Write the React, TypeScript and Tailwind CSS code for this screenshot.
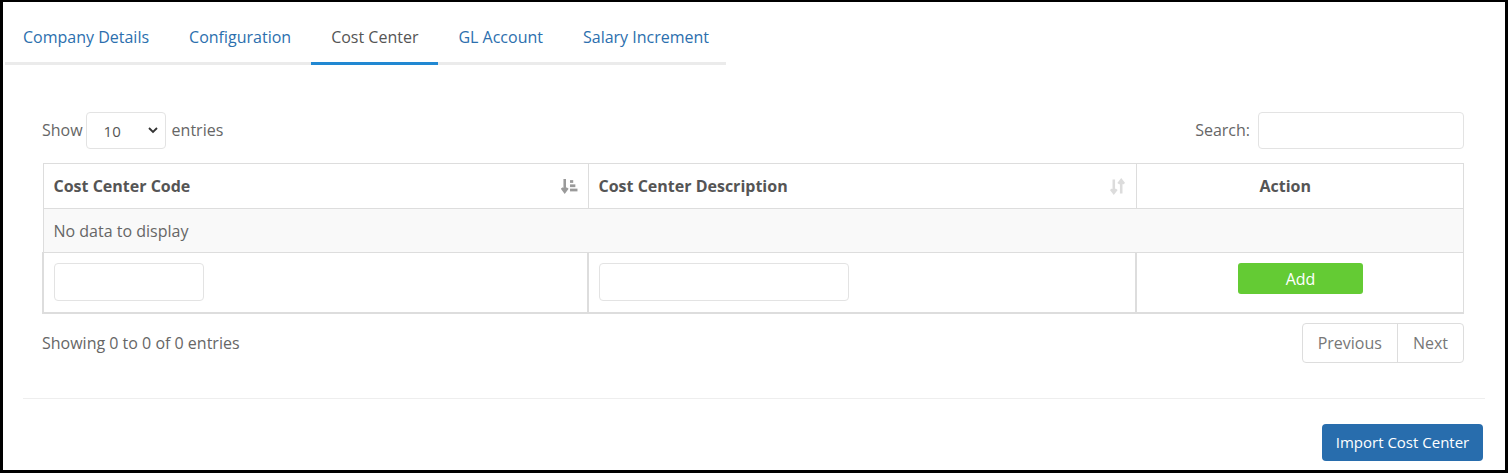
import React from "react";

const SortAsc = () => (
  <svg width="17" height="17" viewBox="0 0 16 16" className="text-[#9a9a9a]">
    <path d="M3.5 1v11M0.8 9.3l2.7 3.7 2.7-3.7" stroke="currentColor" strokeWidth="2.4" fill="none" />
    <rect x="8.5" y="2" width="3" height="2.6" fill="currentColor" />
    <rect x="8.5" y="6" width="5" height="2.6" fill="currentColor" />
    <rect x="8.5" y="10" width="7" height="2.6" fill="currentColor" />
  </svg>
);

const SortBoth = () => (
  <svg width="17" height="17" viewBox="0 0 16 16" className="text-[#dcdcdc]">
    <path d="M4.5 1.5v12M1.8 10.5l2.7 3.5 2.7-3.5" stroke="currentColor" strokeWidth="2.4" fill="none" />
    <path d="M11.5 14.5v-12M8.8 5.5l2.7-3.5 2.7 3.5" stroke="currentColor" strokeWidth="2.4" fill="none" />
  </svg>
);

export default function App() {
  const tabs = ["Company Details", "Configuration", "Cost Center", "GL Account", "Salary Increment"];
  return (
    <div
      className="w-[1508px] h-[473px] bg-white border-black border-t-2 border-l-[3px] border-r-[3px] border-b-[3px] flex flex-col text-[#666] text-[16px]"
      style={{ fontFamily: '"Open Sans", "Noto Sans", sans-serif' }}
    >
      <div className="ml-[2px] w-[721px] flex border-b-[3px] border-[#ebebeb] h-[63px]">
        {tabs.map((t) => {
          const active = t === "Cost Center";
          return (
            <div
              key={t}
              className={
                "shrink-0 whitespace-nowrap px-[20px] pt-[24px] -mb-[3px] border-b-[3px] leading-[22px] first:pl-[18px] " +
                (active ? "border-[#2188d2] text-[#555]" : "border-transparent text-[#2c6fae]")
              }
            >
              {t}
            </div>
          );
        })}
      </div>

      <div className="pl-[39px] pr-[41px] pt-[47px]">
        <div className="flex items-center justify-between h-[36px]">
          <div className="flex items-center">
            <span>Show</span>
            <div className="ml-[3px] w-[80px] h-[37px] border border-[#e3e3e3] rounded-[4px] flex items-center pl-[17px] pr-[4px] justify-between text-[#555] text-[15px]">
              <span className="pt-[2px]">10</span>
              <svg width="14" height="14" viewBox="0 0 14 14" className="mr-[1px]">
                <path d="M3 5l4 4 4-4" stroke="#333" strokeWidth="1.8" fill="none" />
              </svg>
            </div>
            <span className="ml-[6px]">entries</span>
          </div>
          <div className="flex items-center">
            <span>Search:</span>
            <div className="ml-[8px] w-[206px] h-[37px] border border-[#e3e3e3] rounded-[4px]" />
          </div>
        </div>

        <table className="mt-[15px] w-full border-collapse border border-[#dddddd] border-b-2">
          <thead>
            <tr className="h-[45px]">
              <th className="w-[545px] border border-[#dddddd] text-left font-bold text-[#555] px-[10px]">
                <div className="flex items-center justify-between">
                  <span>Cost Center Code</span>
                  <SortAsc />
                </div>
              </th>
              <th className="w-[548px] border border-[#dddddd] text-left font-bold text-[#555] px-[10px]">
                <div className="flex items-center justify-between">
                  <span>Cost Center Description</span>
                  <SortBoth />
                </div>
              </th>
              <th className="border border-[#dddddd] text-center font-bold text-[#555] pr-[29px]">Action</th>
            </tr>
          </thead>
          <tbody>
            <tr className="h-[44px] bg-[#f9f9f9]">
              <td colSpan={3} className="px-[10px] border border-[#dddddd]">No data to display</td>
            </tr>
            <tr className="h-[60px] border-b-2 border-[#dddddd]">
              <td className="border-l-2 border-r-2 border-[#dddddd] px-[10px]">
                <div className="w-[150px] h-[38px] border border-[#e3e3e3] rounded-[4px]" />
              </td>
              <td className="border-r-2 border-[#dddddd] px-[10px]">
                <div className="w-[250px] h-[38px] border border-[#e3e3e3] rounded-[4px]" />
              </td>
              <td className="align-top pt-[10px]">
                <div className="flex justify-center">
                  <div className="ml-[1px] w-[125px] h-[31px] rounded-[3px] bg-[#64cb34] text-white flex items-center justify-center">
                    Add
                  </div>
                </div>
              </td>
            </tr>
          </tbody>
        </table>

        <div className="mt-[9px] flex items-center justify-between h-[40px]">
          <span>Showing 0 to 0 of 0 entries</span>
          <div className="flex h-[40px] border border-[#dddddd] rounded-[4px] text-[#777]">
            <div className="px-[15px] flex items-center border-r border-[#dddddd]">Previous</div>
            <div className="px-[15px] flex items-center">Next</div>
          </div>
        </div>
      </div>

      <div className="mt-[35px] mx-[20px] border-t border-[#eeeeee]" />

      <div className="flex justify-end pr-[22px] mt-[25px]">
        <div className="w-[161px] h-[37px] rounded-[4px] bg-[#286dad] text-white text-[15px] flex items-center justify-center">
          Import Cost Center
        </div>
      </div>
    </div>
  );
}
